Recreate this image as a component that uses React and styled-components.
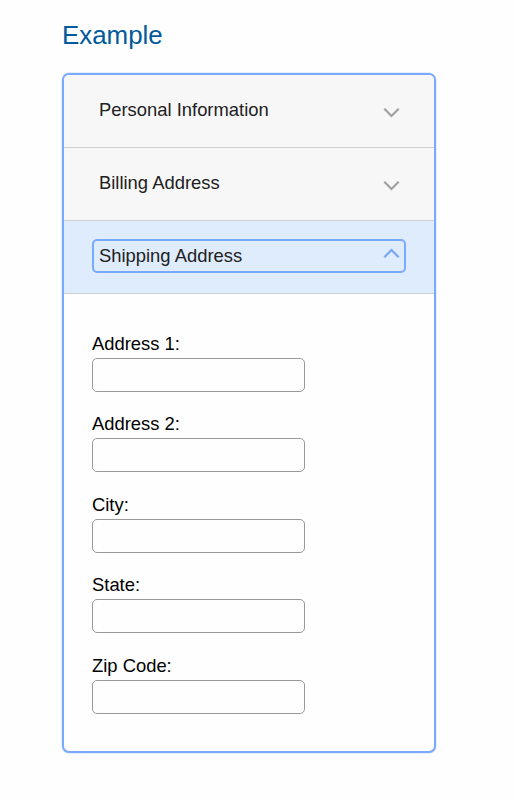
import React, { useState } from "react";
import styled, { createGlobalStyle } from "styled-components";

const GlobalStyle = createGlobalStyle`
  *, *::before, *::after { box-sizing: border-box; }
  body {
    margin: 0;
    background: #fefefe;
    font-family: "Liberation Sans", Arial, Helvetica, sans-serif;
  }
`;

const Page = styled.main`
  width: 514px;
  height: 800px;
  padding: 19px 0 0 62px;
`;

const Title = styled.h2`
  margin: 0 0 22px;
  color: #005a9c;
  font-size: 25.9px;
  font-weight: 400;
  line-height: 32px;
`;

const Accordion = styled.div`
  width: 374px;
  height: 680px;
  border: 2px solid #7aaaff;
  border-radius: 7px;
  box-shadow: 0 0 0 0.5px rgba(122, 170, 255, 0.4);
  background: #fefefe;
  overflow: hidden;
`;

const Header = styled.h3`
  margin: 0;
  height: 73px;
  font-size: 18.4px;
  font-weight: 400;
`;

const Trigger = styled.button`
  display: flex;
  align-items: center;
  width: 100%;
  height: 100%;
  padding: 0 28px 2px;
  border: 0;
  border-bottom: 1px solid #cfcfcf;
  background: ${(p) => (p.$open ? "#dfecfd" : "#f7f7f7")};
  color: #212121;
  font: inherit;
  text-align: left;
  outline: none;
`;

const TriggerContent = styled.span`
  display: flex;
  align-items: center;
  justify-content: space-between;
  width: 314px;
  height: 34px;
  padding: 0 4px 0 5px;
  border: 2px solid ${(p) => (p.$open ? "#7aaaff" : "transparent")};
  border-radius: 5px;
  line-height: 22px;
`;

const Chevron = styled.svg`
  width: 17px;
  height: 11px;
  margin-top: ${(p) => (p.$open ? "-6px" : "4px")};
  transform: ${(p) => (p.$open ? "rotate(180deg)" : "none")};
  fill: none;
  stroke: ${(p) => (p.$open ? "#7aa7f2" : "#a0a0a0")};
  stroke-width: 2.2;
`;

const Panel = styled.div`
  padding: 38px 28px 0;
`;

const Field = styled.div`
  display: flex;
  flex-direction: column;
  height: 80.4px;
`;

const Label = styled.label`
  height: 26px;
  color: #000;
  font-size: 18.4px;
  line-height: 24px;
`;

const Input = styled.input`
  width: 213px;
  height: 34px;
  padding: 4px 6px;
  border: 1px solid #999;
  border-radius: 5px;
  background: #fefefe;
  font: inherit;
  font-size: 18px;
`;

const sections = ["Personal Information", "Billing Address", "Shipping Address"];

const fields = [
  { id: "address1", label: "Address 1:" },
  { id: "address2", label: "Address 2:" },
  { id: "city", label: "City:" },
  { id: "state", label: "State:" },
  { id: "zip", label: "Zip Code:" },
];

function Section({ title, open, onOpen, children }) {
  return (
    <>
      <Header>
        <Trigger type="button" aria-expanded={open} $open={open} onClick={onOpen}>
          <TriggerContent $open={open}>
            {title}
            <Chevron viewBox="0 0 17 11" $open={open} aria-hidden="true">
              <path d="M1.3 1.8 8.5 9 15.7 1.8" />
            </Chevron>
          </TriggerContent>
        </Trigger>
      </Header>
      {open && <Panel>{children}</Panel>}
    </>
  );
}

export default function App() {
  const [active, setActive] = useState("Shipping Address");
  return (
    <>
      <GlobalStyle />
      <Page>
        <Title>Example</Title>
        <Accordion>
          {sections.map((title) => (
            <Section
              key={title}
              title={title}
              open={active === title}
              onOpen={() => setActive(title)}
            >
              {title === "Shipping Address" &&
                fields.map(({ id, label }) => (
                  <Field key={id}>
                    <Label htmlFor={id}>{label}</Label>
                    <Input id={id} type="text" />
                  </Field>
                ))}
            </Section>
          ))}
        </Accordion>
      </Page>
    </>
  );
}
